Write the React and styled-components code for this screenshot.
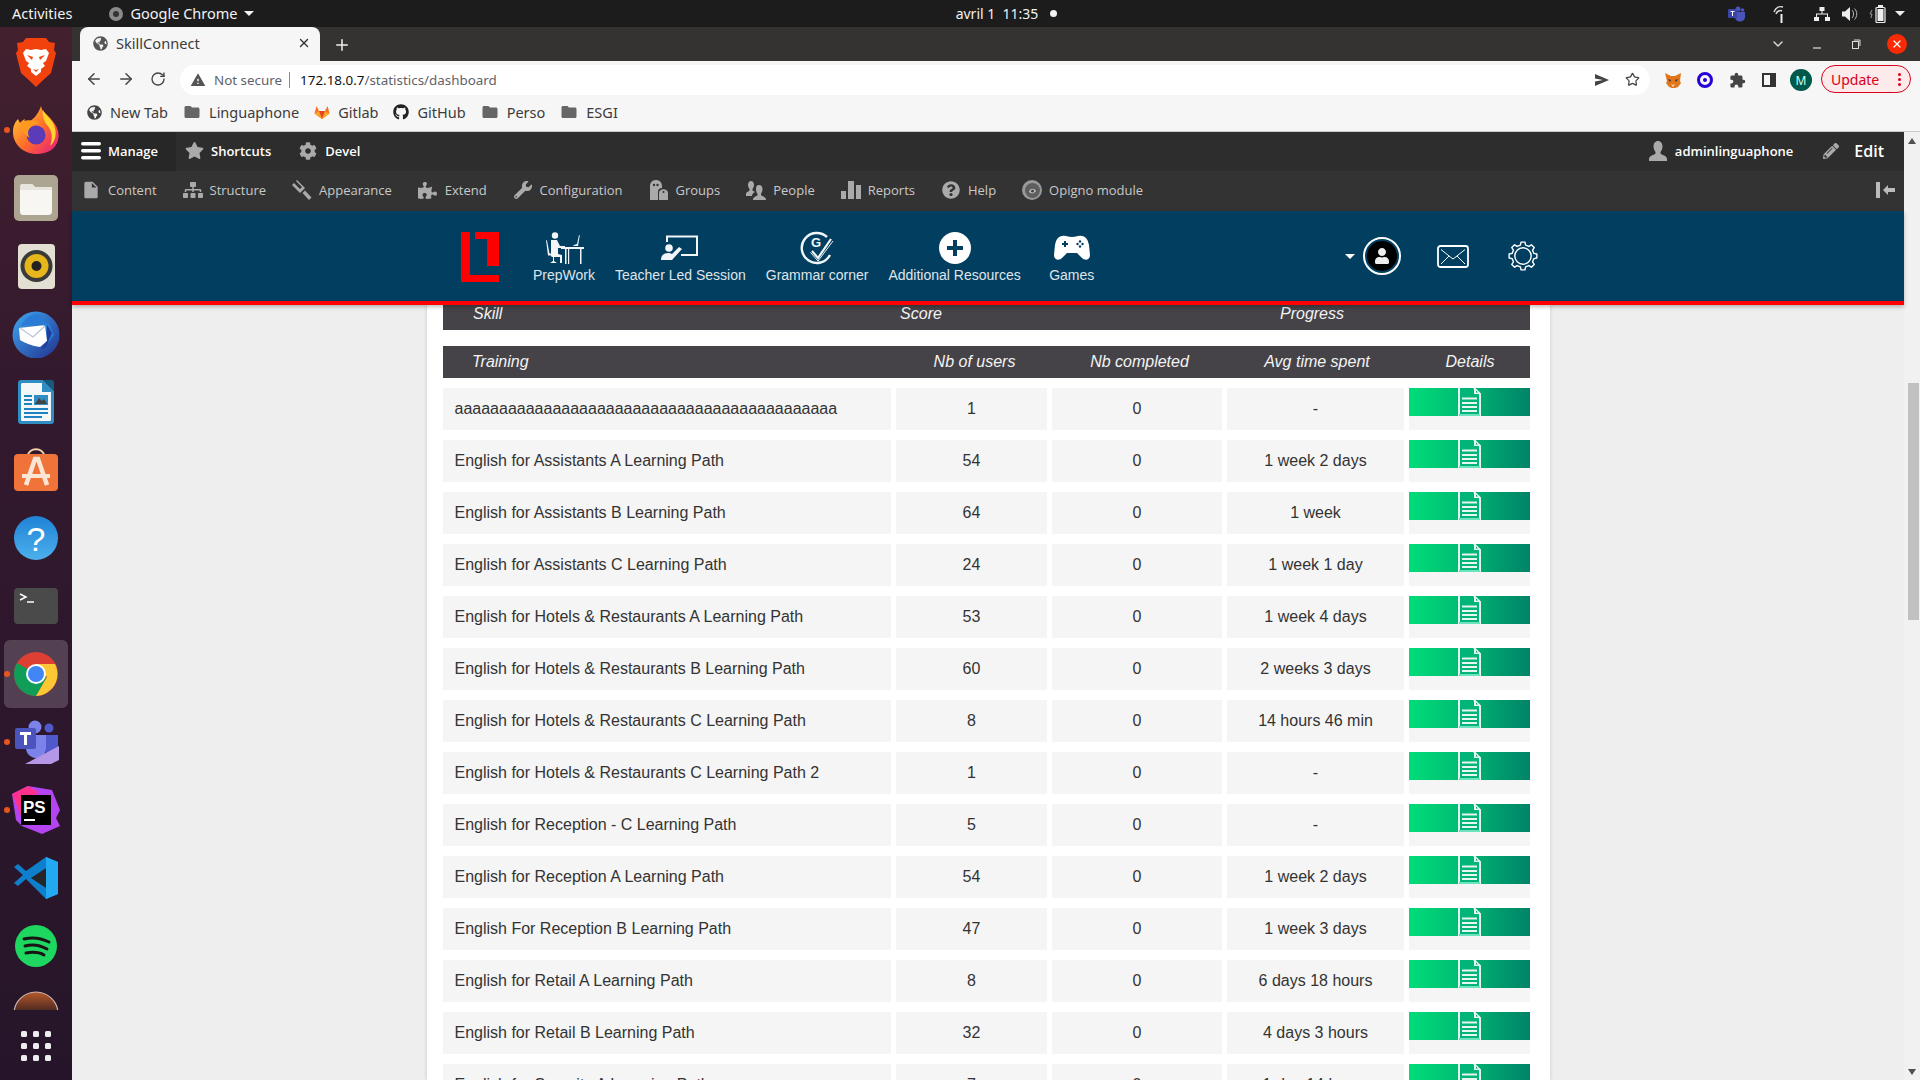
import React from "react";
import styled, { createGlobalStyle } from "styled-components";
import { ArrowLeft, ArrowRight, RotateCw, Star, Plus, X, ChevronDown } from "lucide-react";
import {
  FaStar, FaCog, FaSitemap, FaPuzzlePiece, FaWrench, FaUser, FaQuestionCircle, FaPencilAlt,
  FaGithub, FaGlobeAmericas,
} from "react-icons/fa";
import { MdFolder, MdWarning, MdExtension, MdInsertDriveFile } from "react-icons/md";

const Global = createGlobalStyle`
  html, body { margin: 0; padding: 0; background: #eee; overflow: hidden; }
  * { box-sizing: border-box; }
  svg { display: block; flex: none; }
`;

const Screen = styled.div`
  width: 1920px; height: 1080px; display: flex; flex-direction: column; overflow: hidden;
  font-family: "Liberation Sans", Arial, sans-serif;
`;

/* ---------- GNOME top bar ---------- */
const TopBar = styled.header`
  height: 27px; flex: none; background: #1c1c1c; color: #f2f2f2; display: grid;
  grid-template-columns: 1fr auto 1fr; align-items: center;
  font: 14.5px/25px "Noto Sans", sans-serif; padding: 0 15px 0 12px;
`;
const TopLeft = styled.div`display: flex; align-items: center;`;
const AppMenu = styled.div`display: flex; align-items: center; gap: 7px; margin-left: 37px;`;
const Caret = styled.span`
  width: 0; height: 0; border-left: 5px solid transparent; border-right: 5px solid transparent;
  border-top: 5px solid ${p => p.$color || "#f2f2f2"}; margin-left: ${p => p.$ml || 0}px;
`;
const Clock = styled.div`display: flex; align-items: center; gap: 12px; margin-left: 96px; font-size: 14px;`;
const ClockDot = styled.span`width: 7px; height: 7px; border-radius: 50%; background: #f2f2f2;`;
const TopRight = styled.div`display: flex; align-items: center; justify-content: flex-end;`;
const TrayIcon = styled.span`margin-left: ${p => p.$ml}px; display: flex;`;

/* ---------- body ---------- */
const Desktop = styled.div`flex: 1; min-height: 0; display: flex;`;
const Dock = styled.nav`
  width: 72px; flex: none; display: flex; flex-direction: column;
  background: linear-gradient(180deg, #43202e 0%, #33192e 35%, #26152a 100%);
`;
const DockList = styled.div`flex: 1; min-height: 0; overflow: hidden; padding-top: 1px;`;
const DockItem = styled.div`
  position: relative; height: 68px; width: 64px; margin-left: 4px; border-radius: 6px;
  display: flex; align-items: center; justify-content: center;
  background: ${p => p.$active ? "rgba(255,255,255,.18)" : "transparent"};
  ${p => p.$running && `&::before {
    content: ""; position: absolute; left: 0; top: 31px; width: 6px; height: 6px;
    border-radius: 50%; background: #e95420;
  }`}
`;
const AppsGrid = styled.div`
  height: 70px; flex: none; display: grid; grid-template-columns: repeat(3, 6px); gap: 6px;
  justify-content: center; align-content: center; padding-top: 2px;
  grid-auto-rows: 6px;
`;
const AppsDot = styled.span`background: #eee; border-radius: 1.5px;`;

const Browser = styled.div`flex: 1; min-width: 0; display: flex; flex-direction: column;`;
const TabStrip = styled.div`
  height: 34px; flex: none; background: #353331; display: flex; align-items: flex-end; padding-left: 8px;
  color: #eee; position: relative;
`;
const Tab = styled.div`
  width: 240px; height: 34px; background: #f6f6f6; border-radius: 8px 8px 0 0; display: flex;
  align-items: center; padding: 0 9px 2px 13px; gap: 8px; color: #3c3c3c;
  font: 14.6px "Noto Sans", sans-serif;
`;
const TabTitle = styled.span`flex: 1;`;
const NewTab = styled.span`margin: 0 0 7px 13px; display: flex;`;
const WindowControls = styled.div`
  margin-left: auto; height: 34px; display: flex; align-items: center; padding-right: 13px;
`;
const WinBtn = styled.span`width: 39px; display: flex; justify-content: center;`;
const CloseBtn = styled.span`
  width: 20px; height: 20px; border-radius: 50%; background: #fa2a05; color: #fff; display: flex;
  align-items: center; justify-content: center; margin-left: 12px;
`;

const Toolbar = styled.div`
  height: 36px; flex: none; background: #f6f6f6; display: flex; align-items: center; padding: 0 9px 0 6px;
`;
const NavBtn = styled.span`width: 32px; display: flex; justify-content: center; color: #444;`;
const Omnibox = styled.div`
  margin-left: 6px; width: 1470px; height: 30px; margin-top: 2px; border-radius: 15px; background: #fff; display: flex; align-items: center;
  padding: 0 10px 1px 10px; font: 13.4px "Noto Sans", sans-serif;
`;
const Insecure = styled.span`color: #5f6368; margin-left: 8px;`;
const OmniSep = styled.span`width: 1px; height: 16px; background: #888; margin: 0 10px 0 7px;`;
const Host = styled.span`color: #111;`;
const UrlPath = styled.span`color: #5f6368;`;
const OmniRight = styled.div`margin-left: auto; display: flex; align-items: center; gap: 16px; color: #444;`;
const ExtSlot = styled.span`width: 32px; display: flex; justify-content: center; color: #444;`;
const ExtRow = styled.div`display: flex; align-items: center; margin-left: 7px; margin-top: 2px;`;
const ProfileBadge = styled.span`
  width: 22px; height: 22px; border-radius: 50%; background: #01594b; color: #cfe; display: flex;
  align-items: center; justify-content: center; font: 12px "Noto Sans", sans-serif;
`;
const UpdatePill = styled.div`
  width: 90px; height: 28px; border: 1px solid #d9001b; border-radius: 14px; background: #fdeaea; color: #d9001b;
  display: flex; align-items: center; justify-content: space-between; padding: 0 9px;
  font: 14px "Noto Sans", sans-serif; margin-left: auto;
`;
const KebabDots = styled.span`display: grid; gap: 2px;`;
const KebabDot = styled.span`width: 3px; height: 3px; border-radius: 50%; background: #d9001b;`;

const Bookmarks = styled.div`
  height: 35px; flex: none; background: #f6f6f6; border-bottom: 1px solid #c9c9c9; display: flex; align-items: center;
  padding: 0 0 4px 15px; font: 14.5px "Noto Sans", sans-serif; color: #3c3c3c; gap: 15px;
`;
const Bookmark = styled.div`display: flex; align-items: center; gap: 8px; color: #3c3c3c;`;

/* ---------- page inside browser ---------- */
const PageFrame = styled.div`flex: 1; min-height: 0; display: flex;`;
const Page = styled.div`flex: 1; min-width: 0; display: flex; flex-direction: column; background: #eee;`;
const Scrollbar = styled.div`
  width: 16px; flex: none; background: #f1f1f1; display: flex; flex-direction: column; align-items: center;
`;
const ScrollArrow = styled.span`
  width: 0; height: 0; border-left: 4px solid transparent; border-right: 4px solid transparent;
  ${p => p.$down ? "border-top: 6px solid #505050; margin-top: auto; margin-bottom: 5px;"
    : "border-bottom: 6px solid #505050; margin-top: 6px;"}
`;
const ScrollThumb = styled.div`width: 11px; height: 237px; margin: 239px 0 0 3px; background: #c1c1c1;`;

const ManageBar = styled.div`
  height: 39px; flex: none; background: #2d2d2d; display: flex; align-items: stretch; color: #fff;
  font: 600 13px "Open Sans", sans-serif;
`;
const ManageTab = styled.div`
  display: flex; align-items: center; gap: ${p => p.$gap || 7}px; padding: 0 ${p => p.$pr || 0}px 2px ${p => p.$pl || 0}px;
  background: ${p => p.$active ? "#272727" : "transparent"}; margin-left: ${p => p.$ml || 0}px;
  font-size: ${p => p.$size || 13}px; font-weight: ${p => p.$weight || 600};
`;
const Spacer = styled.div`flex: 1;`;
const TrayBar = styled.div`
  height: 40px; flex: none; background: #333; display: flex; align-items: center; padding: 0 0 2px 9px; gap: 26px;
  color: #c9c9c9; font: 13px "Open Sans", sans-serif;
`;
const TrayItem = styled.div`display: flex; align-items: center; gap: 7px;`;
const TrayIconBox = styled.span`width: 20px; height: 20px; display: flex; align-items: center; justify-content: center; color: #aaa;`;
const CollapseBox = styled.span`margin-left: auto; margin-right: 9px; display: flex;`;

const SiteNav = styled.div`
  position: relative; z-index: 2; height: 94px; flex: none; background: #013e60; border-bottom: 4px solid #f00;
  box-shadow: 0 2px 4px rgba(0,0,0,.25); display: flex; padding-left: 389px; color: #e8eff3;
`;
const Logo = styled.div`margin-top: 21px; width: 38px;`;
const NavList = styled.div`display: flex; margin-left: 24px;`;
const NavLink = styled.div`
  min-width: 82px; padding: 0 10px; display: flex; flex-direction: column; align-items: center; font-size: 14px;
  white-space: nowrap;
`;
const NavIconBox = styled.div`height: 36px; margin-top: 19px; display: flex; align-items: center; justify-content: center;`;
const NavLabel = styled.div`margin-top: 1px; line-height: 16px; opacity: .95;`;
const NavRight = styled.div`
  margin-left: auto; padding-right: 366px; display: flex; align-items: center; height: 90px;
`;
const Avatar = styled.div`
  width: 38px; height: 38px; border-radius: 50%; border: 2px solid #fff; padding: 2px; margin-left: 8px;
  display: flex;
`;
const AvatarInner = styled.div`
  flex: 1; border-radius: 50%; background: #000; color: #eee; display: flex; align-items: center; justify-content: center;
`;
const NavRightIcon = styled.div`margin-left: ${p => p.$ml}px; display: flex;`;

const Content = styled.main`flex: 1; min-height: 0; overflow: hidden; padding-left: 355px;`;
const Panel = styled.div`
  width: 1123px; height: 100%; background: #fff; padding: 0 20px 0 16px;
  box-shadow: 0 0 4px rgba(0,0,0,.16);
`;
const SkillHead = styled.div`
  height: 25px; background: #454348; color: #f4f4f4; font-style: italic; font-size: 16px; line-height: 16px;
  display: grid; grid-template-columns: 307px 342px 1fr; padding-top: 1px;
`;
const HeadLeft = styled.div`padding-left: ${p => p.$pl || 30}px;`;
const HeadCenter = styled.div`text-align: center; padding-left: ${p => p.$pl || 0}px;`;
const TrainHead = styled.div`
  height: 32px; margin-top: 16px; background: #454348; color: #f4f4f4; font-style: italic; font-size: 16px;
  line-height: 32px; display: grid; grid-template-columns: 451px 151px 169px 176px 1fr; column-gap: 5px;
`;
const Rows = styled.div`margin-top: 10px; display: grid; row-gap: 10px;`;
const Row = styled.div`
  height: 42px; display: grid; grid-template-columns: 448px 151px 170px 177px 121px; column-gap: 5px;
  color: #333; font-size: 16px; line-height: 42px;
`;
const NameCell = styled.div`background: #f5f5f5; padding-left: 11.5px; white-space: nowrap; overflow: hidden;`;
const ValueCell = styled.div`background: #f5f5f5; text-align: center; white-space: nowrap;`;
const DetailCell = styled.div`background: #f5f5f5;`;
const DetailBtn = styled.div`
  height: 28px; background: linear-gradient(90deg, #00dc7a 0%, #00c274 35%, #00a06f 70%, #008468 100%);
  display: flex; justify-content: center;
`;

/* ---------- drawn icons ---------- */
const DocIcon = () => (
  <svg width="23" height="28" viewBox="0 0 23 28">
    <path d="M1 0V27H22V6L16 0" fill="#00b577" stroke="#e4f8ef" strokeWidth="2" />
    <path d="M16 0V6H22L16 0Z" fill="#e4f8ef" />
    <path d="M18 2.5v2h2z" fill="#00a06f" />
    <path d="M1 27H22" stroke="#6fe3bf" strokeWidth="2" />
    <path d="M4 10.5H19M4 15H19M4 19H19M4 23H19" stroke="#e4f8ef" strokeWidth="2" />
  </svg>
);

const gearPath = (cx, cy, ro, ri, n) => {
  const pts = [];
  for (let i = 0; i < n; i++) {
    const a = (i / n) * Math.PI * 2, s = (Math.PI * 2) / n;
    [[-0.3, ri], [-0.18, ro], [0.18, ro], [0.3, ri]].forEach(([o, r]) => {
      pts.push(`${(cx + r * Math.cos(a + o * s)).toFixed(2)} ${(cy + r * Math.sin(a + o * s)).toFixed(2)}`);
    });
  }
  return "M" + pts.join("L") + "Z";
};
const GearIcon = () => (
  <svg width="30" height="30" viewBox="0 0 30 30" fill="none" stroke="#fff" strokeWidth="1.4">
    <path d={gearPath(15, 15, 14, 11.2, 8)} strokeLinejoin="round" />
    <circle cx="15" cy="15" r="8.2" />
  </svg>
);
const MailIcon = () => (
  <svg width="32" height="23" viewBox="0 0 32 23" fill="none" stroke="#fff">
    <rect x="1" y="1" width="30" height="21" rx="2.5" strokeWidth="1.8" />
    <path d="M4 4.5L14 12.5L16 14L18 12.5L28 4.5M4 19L12 11M28 19L20 11" strokeWidth="1" />
  </svg>
);
const LogoMark = () => (
  <svg width="38" height="50" viewBox="0 0 38 50">
    <path d="M0 0H9V43H38V50H0Z M14 0H38V34H26V7H14Z" fill="#f00" />
  </svg>
);
const PrepIcon = () => (
  <svg width="40" height="32" viewBox="0 0 40 32" fill="#f2f6f8">
    <circle cx="11" cy="3.5" r="3.2" />
    <path d="M7 8h6l3 6h5v2h-7v6l4 1v8h-2v-6h-8l-1-1z" />
    <path d="M2 8l1 .5 2.5 13H12v2H4z" />
    <path d="M9 24h1v5l3 2H6l3-2z" />
    <path d="M17 15h23v2H17zM21 17h1.5v15H21zM36 17h1.5v15H36zM24 17h1.2v15H24z" />
    <path d="M29 14l1-1 3-1 2-9 .8.3L34 14z" />
  </svg>
);
const TeacherIcon = () => (
  <svg width="38" height="26" viewBox="0 0 38 26" fill="none">
    <path d="M6 7V1.5H36V20H20" stroke="#f2f6f8" strokeWidth="2" />
    <circle cx="8" cy="13" r="3.8" fill="#f2f6f8" />
    <path d="M0 25c0-5 3-7 7-7 2 0 3 .5 4 1l7-7 3 2-10 11z" fill="#f2f6f8" />
  </svg>
);
const GrammarIcon = () => (
  <svg width="34" height="34" viewBox="0 0 34 34" fill="none" stroke="#f2f6f8">
    <path d="M27 6A15 15 0 1 0 30 24" strokeWidth="2.4" />
    <path d="M12 20l6 7L31 8" strokeWidth="2.2" />
    <path d="M10.5 21.5l7.5 8.5L33 10" strokeWidth="1" />
    <text x="11" y="16" fill="#f2f6f8" stroke="none" fontSize="13" fontWeight="700" fontFamily="Liberation Sans">G</text>
  </svg>
);
const PlusCircle = () => (
  <svg width="32" height="32" viewBox="0 0 32 32">
    <circle cx="16" cy="16" r="16" fill="#fff" />
    <path d="M14 8h4v6h6v4h-6v6h-4v-6H8v-4h6z" fill="#013e60" />
  </svg>
);
const PadIcon = () => (
  <svg width="36" height="26" viewBox="0 0 36 26">
    <path d="M8 1c4-1 6 1 10 1s6-2 10-1c4 .5 6 4 7 9l1 10c0 5-5 6-8 3l-5-5H13l-5 5c-3 3-8 2-8-3l1-10C2 5 4 1.500 8 1z" fill="#fff" />
    <path d="M8 8h2V6h2v2h2v2h-2v2h-2v-2H8z" fill="#013e60" />
    <circle cx="26" cy="6.500" r="1.200" fill="#013e60" /><circle cx="26" cy="11.500" r="1.200" fill="#013e60" />
    <circle cx="23.500" cy="9" r="1.200" fill="#013e60" /><circle cx="28.500" cy="9" r="1.200" fill="#013e60" />
  </svg>
);

const HamburgerIcon = () => (
  <svg width="20" height="18" viewBox="0 0 20 18" fill="#fff">
    <rect y="0" width="20" height="3.500" rx="1.700" /><rect y="7" width="20" height="3.500" rx="1.700" /><rect y="14" width="20" height="3.500" rx="1.700" />
  </svg>
);
const HammerIcon = () => (
  <svg width="20" height="20" viewBox="0 0 20 20" fill="#aaa">
    <path d="M5 0l8 8-5 5-8-8 2-2 6 6 2-2-6-6z" /><path d="M10.500 13l2.500-2.500 6.500 7-2.500 2.500z" />
  </svg>
);
const GroupsIcon = () => (
  <svg width="18" height="20" viewBox="0 0 18 20" fill="#aaa">
    <path d="M0 20V6c0-8 12-8 12 0v2c-3 0-4 2-4 4v8z" />
    <path d="M9 20v-7c0-5 9-5 9 0v7z" />
    <circle cx="4" cy="5" r="1.200" fill="#333" /><circle cx="7.500" cy="5" r="1.200" fill="#333" /><circle cx="13.500" cy="12" r="1" fill="#333" />
  </svg>
);
const PeopleIcon = () => (
  <svg width="20" height="20" viewBox="0 0 20 20" fill="#aaa">
    <path d="M5 1c2 0 3 2 3 4s-1 3-1.500 4v1.500L9 12c-2 1-3 2-3 4H0v-2c0-2 3-2.500 3.500-3.500V9C3 8 2 7 2 5s1-4 3-4z" />
    <path d="M13 5c2.500 0 3.500 2 3.500 4.500S15 13 15 14v1c1 1.500 5 1.500 5 5H7c0-3.500 4-3.500 4.500-5v-1c-.5-1-1.500-2-1.500-4.500S10.500 5 13 5z" />
  </svg>
);
const ReportsIcon = () => (
  <svg width="20" height="18" viewBox="0 0 20 18" fill="#aaa">
    <rect y="10" width="5" height="8" /><rect x="7" width="6" height="18" /><rect x="15" y="4" width="5" height="14" />
  </svg>
);
const OpignoIcon = () => (
  <svg width="20" height="20" viewBox="0 0 20 20">
    <circle cx="10" cy="10" r="10" fill="#9a9a9a" /><circle cx="10.500" cy="10.500" r="7.500" fill="#5e5e5e" />
    <path d="M7 12c1-4 5-4 7-1-2 3-5 3-7 1z" fill="#c4c4c4" /><circle cx="10.500" cy="11" r="1.600" fill="#444" />
  </svg>
);
const UserSilhouette = () => (
  <svg width="18" height="20" viewBox="0 0 18 20" fill="#aaa">
    <path d="M9 0c3 0 4.500 2.500 4.500 5.500S12 10 11.500 11v1.500c1 1.500 6.500 2 6.500 5.500v2H0v-2c0-3.500 5.500-4 6.500-5.500V11C6 10 4.500 8.500 4.500 5.500S6 0 9 0z" />
  </svg>
);
const CollapseIcon = () => (
  <svg width="19" height="16" viewBox="0 0 19 16" fill="#bbb">
    <rect width="4" height="16" /><path d="M7 8l5-5v3h7v4h-7v3z" />
  </svg>
);
const GitlabIcon = () => (
  <svg width="16" height="16" viewBox="0 0 16 16">
    <path d="M8 15L.5 9.500 2.500 2 5 7h6l2.500-5 2 7.500z" fill="#fc6d26" />
    <path d="M8 15L5 7h6z" fill="#e24329" /><path d="M8 15L.5 9.500 5 7z" fill="#fca326" /><path d="M8 15l7.500-5.500L11 7z" fill="#fca326" />
  </svg>
);
const SendIcon = () => (
  <svg width="14" height="12" viewBox="0 0 14 12" fill="#444"><path d="M0 0l14 6L0 12V7.500l8-1.500-8-1.500z" /></svg>
);
const SidePanelIcon = () => (
  <svg width="14" height="14" viewBox="0 0 14 14" fill="none" stroke="#333" strokeWidth="2">
    <rect x="1" y="1" width="12" height="12" /><rect x="9" y="1" width="4" height="12" fill="#333" />
  </svg>
);
const FoxIcon = () => (
  <svg width="16" height="15" viewBox="0 0 16 15">
    <path d="M0 0l6 3h4l6-3-1 8 1 2-3 4-3 1H7l-3-1-3-4 1-2z" fill="#e2761b" />
    <path d="M6 11l2 3 2-3-2 1z" fill="#f4e4d5" /><path d="M3 6l3 1-1 2zM13 6l-3 1 1 2z" fill="#333" />
  </svg>
);
const RingIcon = () => (
  <svg width="16" height="16" viewBox="0 0 16 16" fill="none">
    <circle cx="8" cy="8" r="6.500" stroke="#2a00d8" strokeWidth="3" /><circle cx="8" cy="8" r="2" fill="#2a00d8" />
  </svg>
);
const TeamsTray = () => (
  <svg width="17" height="16" viewBox="0 0 17 16">
    <circle cx="10" cy="3" r="2.500" fill="#4b53bc" /><circle cx="14.500" cy="4" r="1.800" fill="#4b53bc" />
    <path d="M7 6h10v5c0 6-10 6-10 0z" fill="#4b53bc" /><rect y="3" width="9" height="9" rx="1" fill="#3d44a8" />
    <path d="M2.500 5h4v1H5v4H4V6H2.500z" fill="#fff" />
  </svg>
);
const SignalIcon = () => (
  <svg width="11" height="18" viewBox="0 0 11 18" fill="none" stroke="#ddd" strokeWidth="1.500">
    <path d="M1 7c2-5 6-6 9-5M3 9c1-3 4-4 6-3" /><rect x="7.500" y="9" width="2" height="9" fill="#eee" stroke="none" />
  </svg>
);
const NetworkIcon = () => (
  <svg width="16" height="14" viewBox="0 0 16 14" fill="#eee">
    <rect x="5.500" width="5" height="4" /><rect y="10" width="5" height="4" /><rect x="11" y="10" width="5" height="4" />
    <path d="M7.500 4h1v2.500h5.500V10h-1V7.500H3V10H2V6.500h5.500z" />
  </svg>
);
const VolumeIcon = () => (
  <svg width="16" height="14" viewBox="0 0 16 14" fill="#eee">
    <path d="M0 4.500h3L8 0v14L3 9.500H0z" /><path d="M10 3c2 2 2 6 0 8M12.500 1.500c3 3 3 8 0 11" fill="none" stroke="#bbb" />
  </svg>
);
const BatteryIcon = () => (
  <svg width="18" height="18" viewBox="0 0 18 18" fill="none">
    <path d="M3 5L1 9h2l-1 4" stroke="#999" /><rect x="7" y="2.500" width="9" height="15" rx="1" stroke="#eee" strokeWidth="1.200" />
    <rect x="9" y="0" width="5" height="2" fill="#eee" /><rect x="8.500" y="4" width="6" height="12" fill="#eee" />
  </svg>
);
const ChromeTiny = () => (
  <svg width="14" height="14" viewBox="0 0 14 14"><circle cx="7" cy="7" r="7" fill="#8a8a8a" /><circle cx="7" cy="7" r="3" fill="#333" /></svg>
);

/* ---------- dock logos ---------- */
const BraveIcon = () => (
  <svg width="40" height="49" viewBox="0 0 40 49">
    <path d="M10 0h20l3 4 6 1-1 7 2 3-5 20-11 10-4 4-4-4L5 35 0 15l2-3-1-7 6-1z" fill="#f1410d" />
    <path d="M10 11l5 1 5-1 5 1 5-1 3 4-3 8-3 2 2 3-4 3v3l-5 4-5-4v-3l-4-3 2-3-3-2-3-8z" fill="#fff" />
    <path d="M11 17l6 2-1 3zM29 17l-6 2 1 3zM17 31l3 1 3-1-3 3z" fill="#f1410d" />
  </svg>
);
const FirefoxIcon = () => (
  <svg width="46" height="48" viewBox="0 0 46 48">
    <defs>
      <linearGradient id="ffa" x1="0" y1="0" x2="1" y2="1"><stop offset="0" stopColor="#ffd52e" /><stop offset=".55" stopColor="#ff6a2b" /><stop offset="1" stopColor="#e31587" /></linearGradient>
    </defs>
    <path d="M28 0c1 6 5 7 10 13 6 7 9 13 7 21-2 9-11 14-21 14C10 48 0 38 0 26c0-6 2-10 5-13l2 4c1-2 3-3 5-4-1 3 0 4 2 4 5-2 11-8 14-17z" fill="url(#ffa)" />
    <path d="M30 4c2 5 8 8 11 15 3 8 2 16-4 21 3-8 2-16-3-21-3-4-5-9-4-15z" fill="#ffd52e" />
    <circle cx="23" cy="29" r="9.500" fill="#5b3bb8" />
    <path d="M8 16c7-3 15-2 19 2-5-1-8 1-10 4-3 3-2 8 0 10-6-3-10-9-9-16z" fill="#ff9a1f" />
  </svg>
);
const FilesIcon = () => (
  <svg width="44" height="46" viewBox="0 0 44 46">
    <rect width="44" height="46" rx="5" fill="#aba592" />
    <path d="M6 12c0-2 1-3 3-3h9l3 3h13c2 0 4 1 4 3v22c0 2-2 3-4 3H9c-2 0-3-1-3-3z" fill="#f7f6f3" />
    <path d="M6 12c0-2 1-3 3-3h9l3 3 17 0v3H6z" fill="#e8e6dc" />
  </svg>
);
const RhythmIcon = () => (
  <svg width="37" height="45" viewBox="0 0 37 45">
    <rect width="37" height="45" rx="4" fill="#e3dfd3" />
    <circle cx="18.500" cy="22" r="16" fill="#3a3a38" /><circle cx="18.500" cy="22" r="12" fill="#e7b61d" />
    <circle cx="18.500" cy="22" r="5" fill="#222" />
  </svg>
);
const BirdIcon = () => (
  <svg width="48" height="47" viewBox="0 0 48 47">
    <defs><linearGradient id="tb" x1="0" y1="0" x2="1" y2="1"><stop offset="0" stopColor="#3fa9f0" /><stop offset="1" stopColor="#22308f" /></linearGradient></defs>
    <circle cx="24" cy="24" r="23.500" fill="url(#tb)" />
    <path d="M7 17l26-3 2 16-7 6c-8-1-15-4-20-7z" fill="#fff" />
    <path d="M8 17l13 9 13-12" fill="none" stroke="#b9c4d4" strokeWidth="1.200" />
    <path d="M9 15c3-7 10-12 17-12l12 11 4 10-6 8-2-17c-6-2-18-2-25 0z" fill="#2a7bd6" />
    <path d="M35 14l5 8-6 14-5 2 6-8z" fill="#1d3fa0" />
  </svg>
);
const WriterIcon = () => (
  <svg width="36" height="44" viewBox="0 0 36 44">
    <path d="M3 0h22l11 11v30c0 2-1 3-3 3H3c-2 0-3-1-3-3V3c0-2 1-3 3-3z" fill="#2f8dc1" />
    <path d="M4 3h20v9h9v27c0 1 0 2-1 2H4c-1 0-1-1-1-2V4z" fill="#f4f6f7" />
    <path d="M25 0l11 11V2c0-1-1-2-2-2z" fill="#16597e" />
    <g fill="#1b84c1"><rect x="6" y="15" width="8" height="2" /><rect x="6" y="19" width="8" height="2" /><rect x="6" y="23" width="8" height="2" /><rect x="6" y="28" width="24" height="2" /><rect x="6" y="32" width="24" height="2" /><rect x="6" y="36" width="18" height="2" /></g>
    <rect x="16" y="15" width="14" height="10" fill="#2f8dc1" /><path d="M17 24l4-6 3 3 2-2 3 5z" fill="#444" />
  </svg>
);
const StoreIcon = () => (
  <svg width="44" height="44" viewBox="0 0 44 44">
    <path d="M14 8c0-9 16-9 16 0" fill="none" stroke="#f5cfa8" strokeWidth="2" />
    <rect y="6" width="44" height="37" rx="4" fill="#f0733a" />
    <path d="M8 28h28" stroke="#fbe6d6" strokeWidth="4" /><path d="M12 37l9-26h3l9 26" fill="none" stroke="#fbe6d6" strokeWidth="4.500" />
  </svg>
);
const HelpIcon = () => (
  <svg width="44" height="44" viewBox="0 0 44 44">
    <defs><linearGradient id="hp" x1="0" y1="0" x2="0" y2="1"><stop offset="0" stopColor="#1f82d6" /><stop offset="1" stopColor="#4db0ec" /></linearGradient></defs>
    <circle cx="22" cy="22" r="22" fill="url(#hp)" />
    <text x="22" y="35" textAnchor="middle" fontSize="34" fill="#fff" fontFamily="Liberation Sans">?</text>
  </svg>
);
const TerminalIcon = () => (
  <svg width="44" height="36" viewBox="0 0 44 36">
    <rect width="44" height="36" rx="4" fill="#4a4a4a" />
    <path d="M6 6l6 3-6 3" fill="none" stroke="#fff" strokeWidth="1.500" /><path d="M13 14h7" stroke="#fff" strokeWidth="1.500" />
  </svg>
);
const ChromeIcon = () => (
  <svg width="44" height="44" viewBox="0 0 44 44">
    <circle cx="22" cy="22" r="22" fill="#dd3f33" />
    <path d="M22 22L3 11A22 22 0 0 0 22 44l11-19z" fill="#0f9d58" />
    <path d="M22 12h19a22 22 0 0 1-19 32l11-19z" fill="#fcc934" />
    <circle cx="22" cy="22" r="10" fill="#fff" /><circle cx="22" cy="22" r="8" fill="#4285f4" />
  </svg>
);
const TeamsIcon = () => (
  <svg width="46" height="44" viewBox="0 0 46 44">
    <circle cx="22" cy="7" r="6.500" fill="#7b83eb" /><circle cx="36" cy="8" r="4.500" fill="#5059c9" />
    <path d="M13 15h20v13c0 15-20 12-20 0z" fill="#7b83eb" /><path d="M33 15h12v12l-12 7z" fill="#5059c9" />
    <rect x="2" y="8" width="21" height="21" rx="2" fill="#4b53bc" />
    <path d="M7 12h11v3h-4v10h-3V15H7z" fill="#fff" />
    <path d="M12 44l34-18v14l-8 4z" fill="#b497e7" />
  </svg>
);
const PhpStormIcon = () => (
  <svg width="48" height="48" viewBox="0 0 48 48">
    <path d="M0 8l16-8 24 4 8 20-4 8 4 8-18 8-20-8L4 34z" fill="#b345f1" /><path d="M0 8l16-8 10 6-16 26z" fill="#ff318c" />
    <rect x="9" y="9" width="30" height="30" fill="#000" />
    <text x="11" y="27" fontSize="17" fontWeight="700" fill="#fff" fontFamily="Liberation Sans">PS</text>
    <rect x="12" y="33" width="11" height="2" fill="#fff" />
  </svg>
);
const VsCodeIcon = () => (
  <svg width="44" height="42" viewBox="0 0 44 42">
    <path d="M32 0l12 5v32l-12 5-20-20-8 7-4-3 9-8-9-8 4-3 8 7z" fill="#0e7fcc" />
    <path d="M32 0l12 5v32l-12 5z" fill="#23a9f2" /><path d="M32 11v20L17 21z" fill="#26252a" />
  </svg>
);
const SpotifyIcon = () => (
  <svg width="42" height="42" viewBox="0 0 42 42">
    <circle cx="21" cy="21" r="21" fill="#1ed760" />
    <path d="M9 14c8-2 17-1 25 3M10 21c7-2 15-1 22 3M11 28c6-1 13-1 18 2" stroke="#191414" strokeWidth="3" strokeLinecap="round" fill="none" />
  </svg>
);
const PartialIcon = () => (
  <svg width="46" height="46" viewBox="0 0 46 46">
    <defs><linearGradient id="pt" x1="0" y1="0" x2="0" y2="1"><stop offset="0" stopColor="#b8592a" /><stop offset=".5" stopColor="#3a2020" /></linearGradient></defs>
    <circle cx="23" cy="23" r="22" fill="url(#pt)" stroke="#c9b8ac" strokeWidth="1.200" />
  </svg>
);

/* ---------- data ---------- */
const dockApps = [
  { Icon: BraveIcon }, { Icon: FirefoxIcon, running: true }, { Icon: FilesIcon }, { Icon: RhythmIcon },
  { Icon: BirdIcon }, { Icon: WriterIcon }, { Icon: StoreIcon }, { Icon: HelpIcon }, { Icon: TerminalIcon },
  { Icon: ChromeIcon, running: true, active: true }, { Icon: TeamsIcon, running: true }, { Icon: PhpStormIcon, running: true },
  { Icon: VsCodeIcon }, { Icon: SpotifyIcon }, { Icon: PartialIcon },
];
const trayItems = [
  ["Content", <MdInsertDriveFile size={20} key="i" />], ["Structure", <FaSitemap size={20} key="i" />],
  ["Appearance", <HammerIcon key="i" />], ["Extend", <FaPuzzlePiece size={19} key="i" />],
  ["Configuration", <FaWrench size={18} key="i" />], ["Groups", <GroupsIcon key="i" />],
  ["People", <PeopleIcon key="i" />], ["Reports", <ReportsIcon key="i" />],
  ["Help", <FaQuestionCircle size={18} key="i" />], ["Opigno module", <OpignoIcon key="i" />],
];
const navItems = [
  ["PrepWork", PrepIcon], ["Teacher Led Session", TeacherIcon], ["Grammar corner", GrammarIcon],
  ["Additional Resources", PlusCircle], ["Games", PadIcon],
];
const rows = [
  ["a".repeat(43), "1", "-"],
  ["English for Assistants A Learning Path", "54", "1 week 2 days"],
  ["English for Assistants B Learning Path", "64", "1 week"],
  ["English for Assistants C Learning Path", "24", "1 week 1 day"],
  ["English for Hotels & Restaurants A Learning Path", "53", "1 week 4 days"],
  ["English for Hotels & Restaurants B Learning Path", "60", "2 weeks 3 days"],
  ["English for Hotels & Restaurants C Learning Path", "8", "14 hours 46 min"],
  ["English for Hotels & Restaurants C Learning Path 2", "1", "-"],
  ["English for Reception - C Learning Path", "5", "-"],
  ["English for Reception A Learning Path", "54", "1 week 2 days"],
  ["English For Reception B Learning Path", "47", "1 week 3 days"],
  ["English for Retail A Learning Path", "8", "6 days 18 hours"],
  ["English for Retail B Learning Path", "32", "4 days 3 hours"],
  ["English for Security A Learning Path", "7", "1 day 14 hours"],
];
const bookmarks = [
  [<FaGlobeAmericas size={15} color="#444" key="i" />, "New Tab"],
  [<MdFolder size={18} color="#666" key="i" />, "Linguaphone"],
  [<GitlabIcon key="i" />, "Gitlab"],
  [<FaGithub size={16} color="#222" key="i" />, "GitHub"],
  [<MdFolder size={18} color="#666" key="i" />, "Perso"],
  [<MdFolder size={18} color="#666" key="i" />, "ESGI"],
];

export default function App() {
  return (
    <Screen>
      <Global />
      <TopBar>
        <TopLeft>
          <span>Activities</span>
          <AppMenu><ChromeTiny /><span>Google Chrome</span><Caret $ml={0} /></AppMenu>
        </TopLeft>
        <Clock><span>avril 1&nbsp;&nbsp;11:35</span><ClockDot /></Clock>
        <TopRight>
          <TrayIcon $ml={0}><TeamsTray /></TrayIcon>
          <TrayIcon $ml={28}><SignalIcon /></TrayIcon>
          <TrayIcon $ml={30}><NetworkIcon /></TrayIcon>
          <TrayIcon $ml={12}><VolumeIcon /></TrayIcon>
          <TrayIcon $ml={11}><BatteryIcon /></TrayIcon>
          <TrayIcon $ml={8}><Caret $color="#eee" /></TrayIcon>
        </TopRight>
      </TopBar>
      <Desktop>
        <Dock>
          <DockList>
            {dockApps.map(({ Icon, running, active }, i) => (
              <DockItem key={i} $running={running} $active={active}><Icon /></DockItem>
            ))}
          </DockList>
          <AppsGrid>{Array.from({ length: 9 }, (_, i) => <AppsDot key={i} />)}</AppsGrid>
        </Dock>
        <Browser>
          <TabStrip>
            <Tab>
              <FaGlobeAmericas size={15} color="#555" />
              <TabTitle>SkillConnect</TabTitle>
              <X size={14} strokeWidth={2.4} color="#333" />
            </Tab>
            <NewTab><Plus size={18} strokeWidth={2} color="#f0f0f0" /></NewTab>
            <WindowControls>
              <WinBtn><ChevronDown size={16} color="#ddd" /></WinBtn>
              <WinBtn><svg width="10" height="10" viewBox="0 0 10 10"><path d="M1 9h8" stroke="#ddd" strokeWidth="1.2" /></svg></WinBtn>
              <WinBtn><svg width="10" height="10" viewBox="0 0 10 10" fill="none" stroke="#ddd"><rect x="1.500" y="2.500" width="6" height="7" /><path d="M3 1h6v6" /></svg></WinBtn>
              <CloseBtn><X size={12} strokeWidth={2.4} /></CloseBtn>
            </WindowControls>
          </TabStrip>
          <Toolbar>
            <NavBtn><ArrowLeft size={18} /></NavBtn>
            <NavBtn><ArrowRight size={18} /></NavBtn>
            <NavBtn><RotateCw size={16} /></NavBtn>
            <Omnibox>
              <MdWarning size={16} color="#555" />
              <Insecure>Not secure</Insecure>
              <OmniSep />
              <Host>172.18.0.7</Host><UrlPath>/statistics/dashboard</UrlPath>
              <OmniRight><SendIcon /><Star size={15} strokeWidth={2} /></OmniRight>
            </Omnibox>
            <ExtRow>
              <ExtSlot><FoxIcon /></ExtSlot>
              <ExtSlot><RingIcon /></ExtSlot>
              <ExtSlot><MdExtension size={17} color="#444" /></ExtSlot>
              <ExtSlot><SidePanelIcon /></ExtSlot>
              <ExtSlot><ProfileBadge>M</ProfileBadge></ExtSlot>
            </ExtRow>
            <UpdatePill>
              <span>Update</span>
              <KebabDots><KebabDot /><KebabDot /><KebabDot /></KebabDots>
            </UpdatePill>
          </Toolbar>
          <Bookmarks>
            {bookmarks.map(([icon, label]) => <Bookmark key={label}>{icon}<span>{label}</span></Bookmark>)}
          </Bookmarks>
          <PageFrame>
            <Page>
              <ManageBar>
                <ManageTab $active $pl={9} $pr={18}><HamburgerIcon /><span>Manage</span></ManageTab>
                <ManageTab $ml={9}><FaStar size={19} color="#aaa" /><span>Shortcuts</span></ManageTab>
                <ManageTab $ml={28} $gap={8}><FaCog size={18} color="#aaa" /><span>Devel</span></ManageTab>
                <Spacer />
                <ManageTab $gap={8}><UserSilhouette /><span>adminlinguaphone</span></ManageTab>
                <ManageTab $ml={30} $gap={15} $pr={20} $size={16}><FaPencilAlt size={16} color="#aaa" /><span>Edit</span></ManageTab>
              </ManageBar>
              <TrayBar>
                {trayItems.map(([label, icon]) => (
                  <TrayItem key={label}><TrayIconBox>{icon}</TrayIconBox><span>{label}</span></TrayItem>
                ))}
                <CollapseBox><CollapseIcon /></CollapseBox>
              </TrayBar>
              <SiteNav>
                <Logo><LogoMark /></Logo>
                <NavList>
                  {navItems.map(([label, Icon]) => (
                    <NavLink key={label}><NavIconBox><Icon /></NavIconBox><NavLabel>{label}</NavLabel></NavLink>
                  ))}
                </NavList>
                <NavRight>
                  <Caret $color="#fff" />
                  <Avatar><AvatarInner><FaUser size={16} /></AvatarInner></Avatar>
                  <NavRightIcon $ml={36}><MailIcon /></NavRightIcon>
                  <NavRightIcon $ml={39}><GearIcon /></NavRightIcon>
                </NavRight>
              </SiteNav>
              <Content>
                <Panel>
                  <SkillHead>
                    <HeadLeft>Skill</HeadLeft><HeadCenter>Score</HeadCenter><HeadCenter $pl={2}>Progress</HeadCenter>
                  </SkillHead>
                  <TrainHead>
                    <HeadLeft $pl={29}>Training</HeadLeft><HeadCenter>Nb of users</HeadCenter><HeadCenter>Nb completed</HeadCenter>
                    <HeadCenter>Avg time spent</HeadCenter><HeadCenter>Details</HeadCenter>
                  </TrainHead>
                  <Rows>
                    {rows.map(([name, users, time]) => (
                      <Row key={name}>
                        <NameCell>{name}</NameCell>
                        <ValueCell>{users}</ValueCell>
                        <ValueCell>0</ValueCell>
                        <ValueCell>{time}</ValueCell>
                        <DetailCell><DetailBtn><DocIcon /></DetailBtn></DetailCell>
                      </Row>
                    ))}
                  </Rows>
                </Panel>
              </Content>
            </Page>
            <Scrollbar>
              <ScrollArrow />
              <ScrollThumb />
              <ScrollArrow $down />
            </Scrollbar>
          </PageFrame>
        </Browser>
      </Desktop>
    </Screen>
  );
}
